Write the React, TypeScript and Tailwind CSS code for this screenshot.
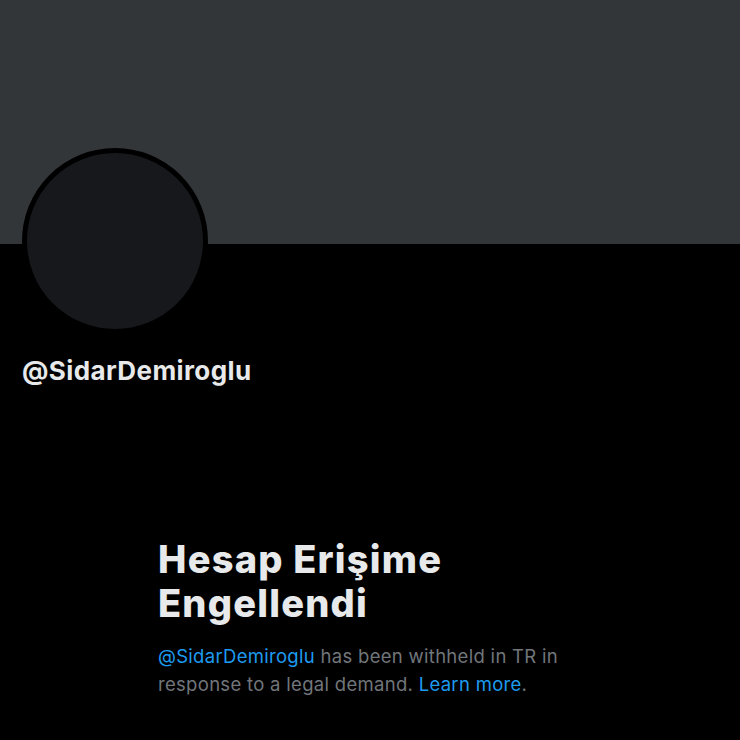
export default function App() {
  return (
    <div className="min-h-[740px] w-[740px] bg-black font-['Inter','Noto_Sans',sans-serif] text-[#e7e9ea]">
      <div className="h-[244px] bg-[#333639]" />
      <div className="relative px-[22px]">
        <div className="-mt-[96px] h-[186px] w-[186px] rounded-full border-[5px] border-black bg-[#16181c]" />
        <div className="mt-[22px] text-[26px] font-bold leading-[30px] tracking-[0.4px]">@SidarDemiroglu</div>
      </div>
      <div className="mx-auto mt-[151px] w-[424px]">
        <h1 className="text-[38px] font-extrabold leading-[44px] tracking-[1.2px]">
          Hesap Erişime Engellendi
        </h1>
        <p className="mt-[17px] text-[18.5px] leading-[28px] tracking-[0.3px] text-[#71767b]">
          <span className="text-[#1d9bf0]">@SidarDemiroglu</span> has been withheld in TR in response to a
          legal demand. <span className="text-[#1d9bf0]">Learn more</span>.
        </p>
      </div>
    </div>
  );
}
